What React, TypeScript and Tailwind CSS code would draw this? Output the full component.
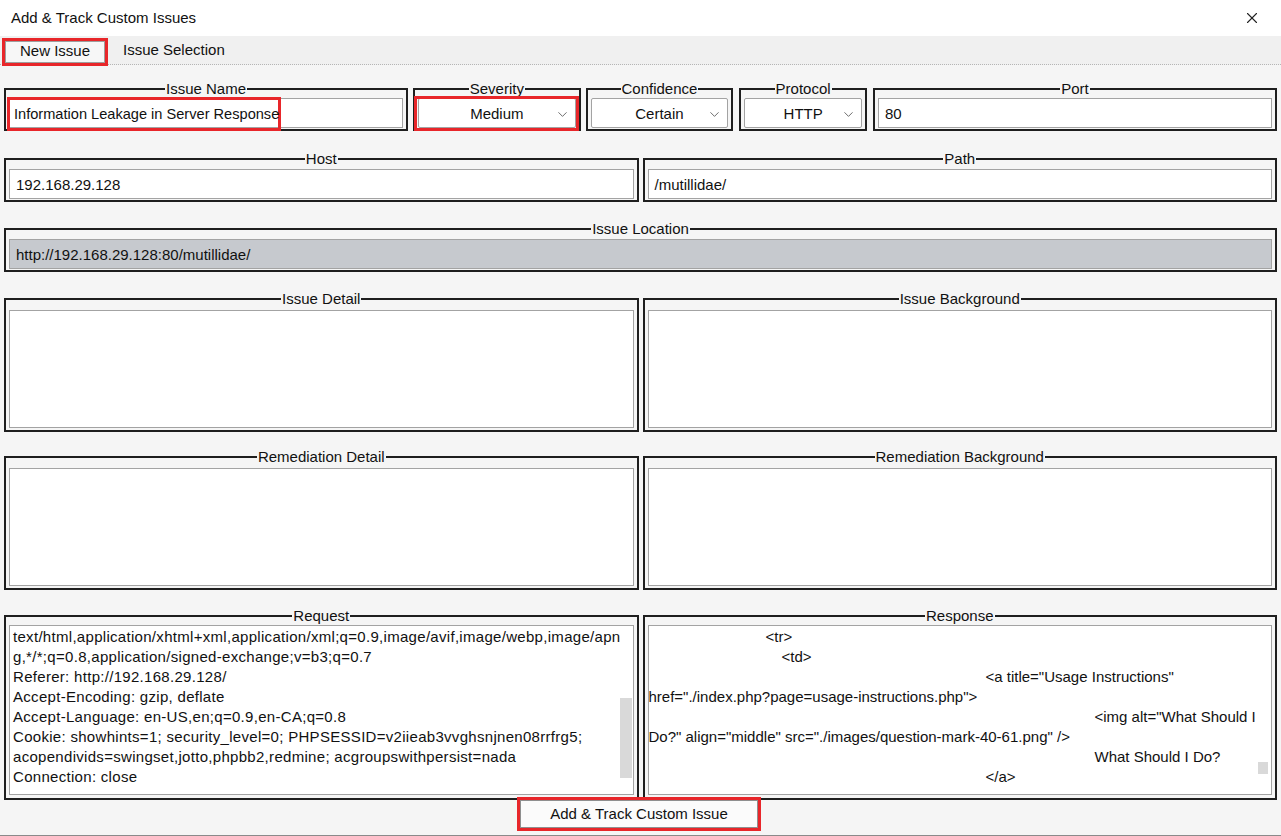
import { X, ChevronDown } from "lucide-react"

interface GroupProps {
  label: string
  className?: string
  children: React.ReactNode
}

function Group({ label, className = "", children }: GroupProps) {
  return (
    <fieldset className={`border-2 border-[#1e1e1e] px-[3px] pb-[2px] min-w-0 ${className}`}>
      <legend className="mx-auto px-[1px] leading-[16px] text-[15px]">{label}</legend>
      {children}
    </fieldset>
  )
}

function Field({ value = "", grey = false }: { value?: string; grey?: boolean }) {
  return (
    <div
      className={`mt-[1px] h-[30px] border border-[#a3a3a3] flex items-center pt-[2px] px-[6px] whitespace-nowrap ${
        grey ? "bg-[#c6c9ce]" : "bg-white"
      }`}
    >
      {value}
    </div>
  )
}

function Dropdown({ value }: { value: string }) {
  return (
    <div className="mt-[1px] h-[30px] border border-[#a3a3a3] rounded-[2px] bg-white flex items-center pt-[2px] relative">
      <span className="flex-1 text-center">{value}</span>
      <ChevronDown className="absolute right-[5px] w-[15px] h-[15px] text-[#444]" strokeWidth={1.25} />
    </div>
  )
}

const requestLines = [
  "text/html,application/xhtml+xml,application/xml;q=0.9,image/avif,image/webp,image/apn",
  "g,*/*;q=0.8,application/signed-exchange;v=b3;q=0.7",
  "Referer: http://192.168.29.128/",
  "Accept-Encoding: gzip, deflate",
  "Accept-Language: en-US,en;q=0.9,en-CA;q=0.8",
  "Cookie: showhints=1; security_level=0; PHPSESSID=v2iieab3vvghsnjnen08rrfrg5;",
  "acopendivids=swingset,jotto,phpbb2,redmine; acgroupswithpersist=nada",
  "Connection: close",
]

export default function App() {
  return (
    <div className="w-[1281px] h-[836px] bg-[#f5f5f5] text-[#111] text-[15px] font-['Liberation_Sans',Arial,sans-serif] flex flex-col overflow-hidden border-b border-[#8a8a8a]">
      {/* title bar */}
      <div className="h-[36px] bg-white flex items-center justify-between pl-[11px] pr-[20px] shrink-0">
        <span>Add &amp; Track Custom Issues</span>
        <X className="w-[18px] h-[18px] text-[#222]" strokeWidth={1.5} />
      </div>

      {/* tabs */}
      <div className="h-[29px] bg-[#f0f0f0] border-b border-dotted border-[#b5b5b5] flex items-start pt-[2px] pl-[2px] shrink-0">
        <div className="border-[3px] border-[#e8262a] h-[28px] w-[106px] flex">
          <div className="flex-1 bg-[#f7f7f7] border border-[#9e9e9e] flex items-center justify-center pb-[2px]">New Issue</div>
        </div>
        <div className="ml-[15px] h-[24px] flex items-center">Issue Selection</div>
      </div>

      <div className="flex flex-col px-[4px] pt-[16px]">
        {/* row 1 */}
        <div className="flex h-[50px]">
          <Group label="Issue Name" className="w-[405px] h-[50px]">
            <div className="relative">
              <Field />
              <div className="absolute left-[-2px] top-[-1px] w-[274px] h-[34px] border-[3px] border-[#e8262a] flex items-center pt-[2px] pl-[4px] whitespace-nowrap text-[14.6px]">
                Information Leakage in Server Response
              </div>
            </div>
          </Group>
          <Group label="Severity" className="ml-[5px] w-[168px] h-[50px]">
            <div className="relative">
              <Dropdown value="Medium" />
              <div className="absolute left-[-4px] top-[-2px] right-[-3px] h-[35px] border-[3px] border-[#e8262a]" />
            </div>
          </Group>
          <Group label="Confidence" className="ml-[5px] w-[148px] h-[50px]">
            <Dropdown value="Certain" />
          </Group>
          <Group label="Protocol" className="ml-[6px] w-[128px] h-[50px]">
            <Dropdown value="HTTP" />
          </Group>
          <Group label="Port" className="ml-[6px] w-[405px] h-[50px]">
            <Field value="80" />
          </Group>
        </div>

        {/* row 2 */}
        <div className="flex gap-[4px] mt-[20px]">
          <Group label="Host" className="w-[635px] h-[51px]">
            <div className="pt-[1px]">
              <Field value="192.168.29.128" />
            </div>
          </Group>
          <Group label="Path" className="w-[635px] h-[51px]">
            <div className="pt-[1px]">
              <Field value="/mutillidae/" />
            </div>
          </Group>
        </div>

        {/* row 3 */}
        <Group label="Issue Location" className="mt-[19px] w-[1273px] h-[51px]">
          <div className="pt-[1px]">
            <Field value="http://192.168.29.128:80/mutillidae/" grey />
          </div>
        </Group>

        {/* row 4 */}
        <div className="flex gap-[4px] mt-[19px]">
          <Group label="Issue Detail" className="w-[635px] h-[141px]">
            <div className="mt-[3px] h-[118px] bg-white border border-[#a3a3a3]" />
          </Group>
          <Group label="Issue Background" className="w-[635px] h-[141px]">
            <div className="mt-[3px] h-[118px] bg-white border border-[#a3a3a3]" />
          </Group>
        </div>

        {/* row 5 */}
        <div className="flex gap-[4px] mt-[17px]">
          <Group label="Remediation Detail" className="w-[635px] h-[141px]">
            <div className="mt-[3px] h-[118px] bg-white border border-[#a3a3a3]" />
          </Group>
          <Group label="Remediation Background" className="w-[635px] h-[141px]">
            <div className="mt-[3px] h-[118px] bg-white border border-[#a3a3a3]" />
          </Group>
        </div>

        {/* row 6 */}
        <div className="flex gap-[4px] mt-[18px]">
          <Group label="Request" className="w-[635px] h-[192px]">
            <div className="mt-[1px] h-[170px] bg-white border border-[#a3a3a3] relative pl-[3px] pt-[1px] leading-[20px] tracking-[0.3px] whitespace-nowrap overflow-hidden">
              {requestLines.map((line, i) => (
                <div key={i}>{line}</div>
              ))}
              <div className="absolute right-[1px] top-[72px] w-[12px] h-[80px] bg-[#d9d9d9]" />
            </div>
          </Group>
          <Group label="Response" className="w-[635px] h-[192px]">
            <div className="mt-[1px] h-[170px] bg-white border border-[#a3a3a3] relative pt-[1px] leading-[20px] whitespace-nowrap overflow-hidden">
              <div className="pl-[117px]">&lt;tr&gt;</div>
              <div className="pl-[133px]">&lt;td&gt;</div>
              <div className="pl-[337px]">&lt;a title="Usage Instructions"</div>
              <div>href="./index.php?page=usage-instructions.php"&gt;</div>
              <div className="pl-[446px]">&lt;img alt="What Should I</div>
              <div>Do?" align="middle" src="./images/question-mark-40-61.png" /&gt;</div>
              <div className="pl-[446px]">What Should I Do?</div>
              <div className="pl-[337px]">&lt;/a&gt;</div>
              <div className="absolute right-[3px] top-[136px] w-[10px] h-[12px] bg-[#d9d9d9]" />
            </div>
          </Group>
        </div>

        {/* action */}
        <div className="flex justify-center mt-[-3px]">
          <div className="ml-[-3px] w-[244px] h-[34px] border-[3px] border-[#e8262a] flex">
            <div className="flex-1 bg-[#fbfbfb] border border-[#8f8f8f] flex items-center justify-center">
              Add &amp; Track Custom Issue
            </div>
          </div>
        </div>
      </div>
    </div>
  )
}
